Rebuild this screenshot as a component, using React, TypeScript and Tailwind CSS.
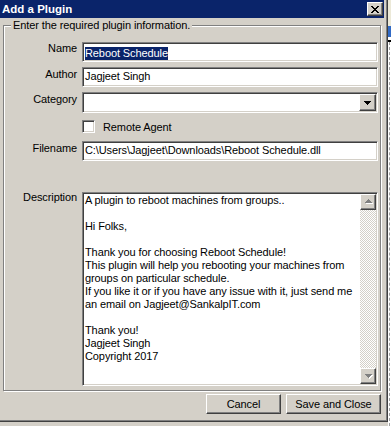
import React from 'react';

// Classic Windows "Add a Plugin" dialog
const FONT = "font-['Liberation_Sans',Arial,sans-serif]";

const sunken =
  'border border-t-[#808080] border-l-[#808080] border-b-white border-r-white shadow-[inset_1px_1px_0_#404040,inset_-1px_-1px_0_#d4d0c8] bg-white';

const raised =
  'border border-t-white border-l-white border-b-[#404040] border-r-[#404040] shadow-[inset_-1px_-1px_0_#808080] bg-[#d4d0c8]';

const DownArrow: React.FC<{ disabled?: boolean }> = ({ disabled }) => (
  <svg width="9" height="6" viewBox="0 0 9 6" shapeRendering="crispEdges">
    {disabled && <path d="M2 2h7v1H8v1H7v1H6v1H5V5H4V4H3V3H2z" fill="#ffffff" />}
    <path d="M1 1h7v1H7v1H6v1H5v1H4V4H3V3H2V2H1z" fill={disabled ? '#808080' : '#000000'} />
  </svg>
);

const UpArrow: React.FC = () => (
  <svg width="9" height="6" viewBox="0 0 9 6" shapeRendering="crispEdges">
    <path d="M5 1h1v1h1v1h1v1h1v1H2V4h1V3h1V2h1z" fill="#ffffff" />
    <path d="M4 0h1v1h1v1h1v1h1v1H1V3h1V2h1V1h1z" fill="#808080" />
  </svg>
);

const Field: React.FC<{ label: string; children: React.ReactNode; className?: string; labelClass?: string }> = ({
  label,
  children,
  className = '',
  labelClass = '',
}) => (
  <div className={`flex items-start ${className}`}>
    <div className={`w-[73px] shrink-0 text-right leading-[13px] ${labelClass}`}>{label}</div>
    <div className="ml-[5px] w-[296px]">{children}</div>
  </div>
);

const description = [
  'A plugin to reboot machines from groups..',
  '',
  'Hi Folks,',
  '',
  'Thank you for choosing Reboot Schedule!',
  'This plugin will help you rebooting your machines from',
  'groups on particular schedule.',
  'If you like it or if you have any issue with it, just send me',
  'an email on Jagjeet@SankalpIT.com',
  '',
  'Thank you!',
  'Jagjeet Singh',
  'Copyright 2017',
];

export default function App() {
  return (
    <div className={`w-[391px] h-[426px] flex bg-[#d4d0c8] text-[11px] tracking-[-0.1px] text-black overflow-hidden ${FONT}`}>
      {/* window */}
      <div className="w-[388px] h-[422px] shrink-0 flex flex-col pr-[4px] shadow-[inset_-1px_-1px_0_#404040,inset_-2px_-2px_0_#808080]">
        {/* title bar */}
        <div className="h-[18px] w-[384px] bg-[#0a246a] flex items-center justify-between pl-[2px] pr-[1px]">
          <span className="text-white font-bold text-[11.5px] tracking-normal leading-[13px]">Add a Plugin</span>
          <div className={`w-[16px] h-[14px] flex items-center justify-center ${raised}`}>
            <svg width="8" height="7" viewBox="0 0 8 7" shapeRendering="crispEdges">
              <path
                d="M0 0h2v1h1v1h2V1h1V0h2v1H7v1H6v1H5v1h1v1h1v1h1v1H6V6H5V5H3v1H2v1H0V6h1V5h1V4h1V3H2V2H1V1H0z"
                fill="#000"
              />
            </svg>
          </div>
        </div>

        {/* group box */}
        <fieldset className="mt-[2px] ml-[3px] w-[378px] border border-[#808080] shadow-[inset_1px_1px_0_#fff,1px_1px_0_#fff] pt-[11px] pr-[2px] pb-[4px]">
          <legend className="ml-[7px] px-[2px] leading-[11px] bg-[#d4d0c8]">Enter the required plugin information.</legend>

          <Field label="Name">
            <div className={`h-[20px] pl-[2px] pt-[2px] ${sunken}`}>
              <span className="inline-block bg-[#0a246a] text-white leading-[13px] h-[13px]">Reboot Schedule</span>
            </div>
          </Field>

          <Field label="Author" className="mt-[5px]" labelClass="pt-[1px]">
            <div className={`h-[20px] pl-[2px] pt-[2px] leading-[13px] ${sunken}`}>Jagjeet Singh</div>
          </Field>

          <Field label="Category" className="mt-[5px]" labelClass="pt-[1px]">
            <div className={`h-[21px] flex justify-end p-[1px] ${sunken}`}>
              <div className={`w-[17px] h-[17px] flex items-center justify-center ${raised}`}>
                <DownArrow />
              </div>
            </div>
          </Field>

          <div className="mt-[7px] ml-[78px] flex items-center h-[13px]">
            <div className={`w-[13px] h-[13px] ${sunken}`} />
            <span className="ml-[8px] leading-[13px] pt-[1px]">Remote Agent</span>
          </div>

          <Field label="Filename" className="mt-[8px]" labelClass="pt-[1px]">
            <div className={`h-[20px] pl-[2px] pt-[2px] leading-[13px] whitespace-nowrap overflow-hidden ${sunken}`}>
              C:\Users\Jagjeet\Downloads\Reboot Schedule.dll
            </div>
          </Field>

          <Field label="Description" className="mt-[31px]" labelClass="-mt-[1px]">
            <div className={`h-[194px] flex p-[1px] ${sunken}`}>
              <div className="flex-1 pl-[1px] leading-[13px] whitespace-pre overflow-hidden">
                {description.map((line, i) => (
                  <div key={i} className="h-[13px]">
                    {line}
                  </div>
                ))}
              </div>
              <div className="w-[16px] flex flex-col bg-[image:repeating-conic-gradient(#ffffff_0_25%,#d4d0c8_0_50%)] bg-[length:2px_2px]">
                <div className={`h-[16px] flex items-center justify-center ${raised}`}>
                  <UpArrow />
                </div>
                <div className="flex-1" />
                <div className={`h-[16px] flex items-center justify-center ${raised}`}>
                  <DownArrow disabled />
                </div>
              </div>
            </div>
          </Field>
        </fieldset>

        {/* buttons */}
        <div className="mt-[3px] flex justify-end gap-[5px] pr-[3px]">
          <button className={`w-[75px] h-[20px] leading-[13px] ${raised}`}>Cancel</button>
          <button className={`w-[95px] h-[20px] leading-[13px] ${raised}`}>Save and Close</button>
        </div>
      </div>

      {/* desktop sliver to the right */}
      <div className="flex-1 h-full bg-white flex flex-col">
        <div className="h-[26px] bg-[#ece9d8]" />
        <div className="h-[11px] bg-[#316ac5]" />
        <div className="h-[2px] mt-[3px] bg-black" />
        <div className="flex-1 border-l border-dashed border-[#a0a0a0] ml-[1px]" />
      </div>
    </div>
  );
}
